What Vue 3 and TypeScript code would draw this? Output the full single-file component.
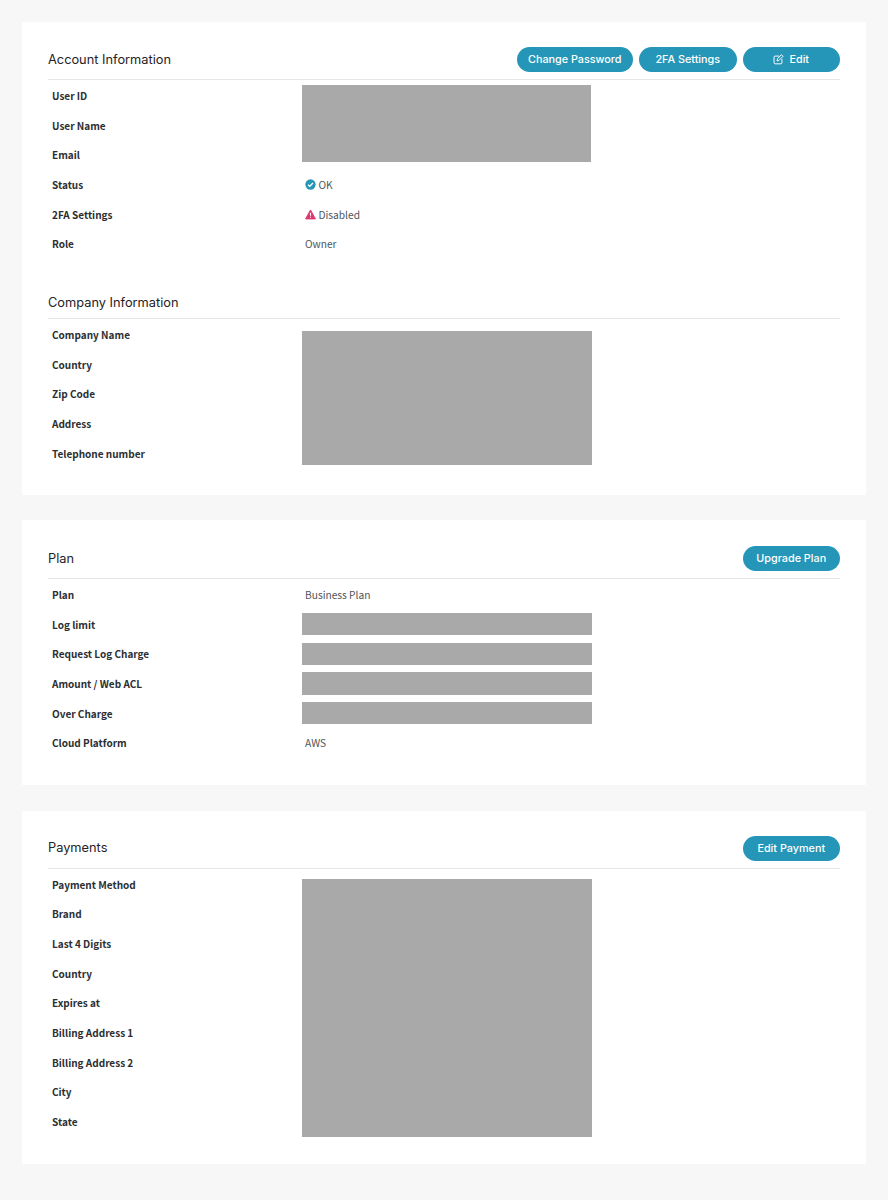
<script setup lang="ts">
interface Row { label: string; value?: string; icon?: 'ok' | 'warn'; bar?: boolean }
interface Cover { top: number; height: number; width: number }
interface Section {
  title: string
  buttons?: { text: string; icon?: boolean; width: number }[]
  rows: Row[]
  cover?: Cover
}
interface Card { sections: Section[] }

const cards: Card[] = [
  {
    sections: [
      {
        title: 'Account Information',
        buttons: [
          { text: 'Change Password', width: 116.5 },
          { text: '2FA Settings', width: 97.5 },
          { text: 'Edit', icon: true, width: 97.5 },
        ],
        rows: [
          { label: 'User ID' },
          { label: 'User Name' },
          { label: 'Email' },
          { label: 'Status', value: 'OK', icon: 'ok' },
          { label: '2FA Settings', value: 'Disabled', icon: 'warn' },
          { label: 'Role', value: 'Owner' },
        ],
        cover: { top: 4.5, height: 77.5, width: 289 },
      },
      {
        title: 'Company Information',
        rows: [
          { label: 'Company Name' },
          { label: 'Country' },
          { label: 'Zip Code' },
          { label: 'Address' },
          { label: 'Telephone number' },
        ],
        cover: { top: 12, height: 134, width: 290 },
      },
    ],
  },
  {
    sections: [
      {
        title: 'Plan',
        buttons: [{ text: 'Upgrade Plan', width: 97.5 }],
        rows: [
          { label: 'Plan', value: 'Business Plan' },
          { label: 'Log limit', bar: true },
          { label: 'Request Log Charge', bar: true },
          { label: 'Amount / Web ACL', bar: true },
          { label: 'Over Charge', bar: true },
          { label: 'Cloud Platform', value: 'AWS' },
        ],
      },
    ],
  },
  {
    sections: [
      {
        title: 'Payments',
        buttons: [{ text: 'Edit Payment', width: 97.5 }],
        rows: [
          { label: 'Payment Method' },
          { label: 'Brand' },
          { label: 'Last 4 Digits' },
          { label: 'Country' },
          { label: 'Expires at' },
          { label: 'Billing Address 1' },
          { label: 'Billing Address 2' },
          { label: 'City' },
          { label: 'State' },
        ],
        cover: { top: 10, height: 258, width: 290 },
      },
    ],
  },
]
</script>

<template>
  <main class="page">
    <section v-for="(card, c) in cards" :key="c" class="card">
      <div v-for="section in card.sections" :key="section.title" class="section">
        <header class="head">
          <h2 class="title">{{ section.title }}</h2>
          <div v-if="section.buttons" class="actions">
            <button
              v-for="b in section.buttons"
              :key="b.text"
              class="btn"
              :style="{ width: b.width + 'px' }"
            >
              <svg v-if="b.icon" class="pen" viewBox="0 0 16 16" fill="none" stroke="currentColor" stroke-width="1.4" stroke-linecap="round" stroke-linejoin="round">
                <path d="M8 3H3C2.3 3 1.5 3.6 1.5 4.4v8.4c0 .8.7 1.5 1.5 1.5h8.6c.8 0 1.4-.7 1.4-1.5V8" />
                <path d="M12.6 1.4l2 2L8.6 9.4l-2.8.8.8-2.8z" />
              </svg>
              {{ b.text }}
            </button>
          </div>
        </header>
        <div class="table">
          <div v-for="row in section.rows" :key="row.label" class="row">
            <div class="label">{{ row.label }}</div>
            <div v-if="row.bar" class="bar"></div>
            <div v-else class="value">
              <svg v-if="row.icon === 'ok'" class="ico" viewBox="0 0 12 12">
                <circle cx="6" cy="6" r="5.6" fill="#2596b8" />
                <path d="M3.3 6.2l1.9 1.8 3.5-3.7" fill="none" stroke="#fff" stroke-width="1.5" />
              </svg>
              <svg v-if="row.icon === 'warn'" class="ico" viewBox="0 0 12 12">
                <path d="M6 1L11.4 10.8H.6z" fill="#e0356f" stroke="#e0356f" stroke-width="1" stroke-linejoin="round" />
                <path d="M6 4.2v3.2M6 8.4v1.2" stroke="#fff" stroke-width="1.2" />
              </svg>
              <span v-if="row.value">{{ row.value }}</span>
            </div>
          </div>
          <div
            v-if="section.cover"
            class="cover"
            :style="{ top: section.cover.top + 'px', height: section.cover.height + 'px', width: section.cover.width + 'px' }"
          ></div>
        </div>
      </div>
    </section>
  </main>
</template>

<style>
html, body { background: #f7f7f7; }
</style>

<style scoped>
.page {
  box-sizing: border-box;
  width: 888px;
  height: 1200px;
  padding: 22px;
  background: #f7f7f7;
  display: flex;
  flex-direction: column;
  gap: 25px;
}
.card {
  background: #fff;
  padding: 25px 26px 26.7px;
}
.card:nth-child(2) {
  padding-top: 26px;
}
.card:nth-child(3) {
  margin-top: 1px;
  padding-bottom: 27px;
}
.section + .section {
  margin-top: 34px;
}
.head {
  display: flex;
  align-items: center;
  justify-content: space-between;
  min-height: 25px;
  padding-bottom: 7px;
  border-bottom: 1px solid #e4e6e8;
}
.section + .section .head {
  min-height: 0;
}
.title {
  margin: 0;
  font: 400 12.8px/18px Inter, "Liberation Sans", sans-serif;
  color: #1f2326;
}
.section + .section .title {
  margin-top: 1px;
  margin-bottom: -1px;
}
.actions {
  display: flex;
  gap: 6px;
}
.btn {
  display: inline-flex;
  align-items: center;
  justify-content: center;
  gap: 5px;
  height: 25px;
  padding: 0;
  border: none;
  border-radius: 13px;
  background: #2596b8;
  color: #fff;
  font: 500 10.8px/25px Inter, "Liberation Sans", sans-serif;
}
.pen {
  width: 11px;
  height: 11px;
}
.table {
  position: relative;
  padding-top: 1px;
}
.row {
  display: flex;
  align-items: center;
  height: 29.68px;
  padding-left: 4px;
  font: 400 10.2px/16px "Noto Sans CJK JP", "Noto Sans", sans-serif;
}
.label {
  width: 253px;
  flex: none;
  font-size: 10px;
  font-weight: 700;
  color: #2b2f33;
}
.value {
  display: flex;
  align-items: center;
  gap: 2.5px;
  color: #4f5559;
}
.ico {
  width: 11px;
  height: 11px;
}
.bar {
  width: 290.5px;
  height: 22.4px;
  margin: -1px 0 0 -3.5px;
  background: #a9a9a9;
}
.cover {
  position: absolute;
  left: 253.5px;
  background: #a9a9a9;
}
</style>
